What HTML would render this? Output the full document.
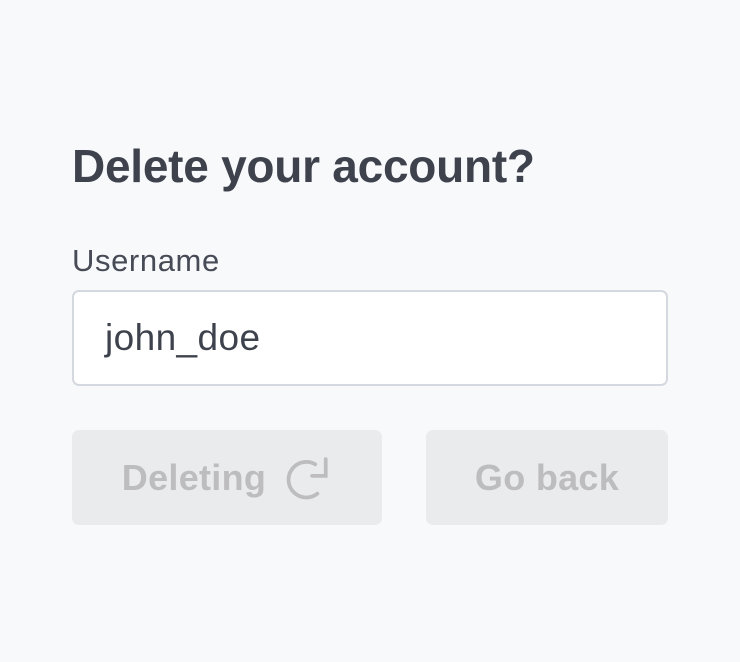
<!DOCTYPE html>
<html><head><style>
body{margin:0;width:740px;height:662px;background:#f8f9fb;font-family:"Liberation Sans",Arial,sans-serif;position:relative;overflow:hidden}
h1{position:absolute;left:72px;top:139px;margin:0;font-size:46px;font-weight:bold;color:#3e424d;letter-spacing:-0.25px}
.lbl{position:absolute;left:72px;top:243px;font-size:31px;color:#474b56;letter-spacing:0.6px}
.inp{position:absolute;left:72px;top:290px;width:592px;height:92px;border:2px solid #d4d8df;border-radius:7px;background:#fff;box-sizing:content-box}
.inp span{position:absolute;left:31px;top:25px;font-size:37px;color:#3e424d;letter-spacing:0.4px}
.btn{position:absolute;top:430px;height:95px;background:#eaebed;border-radius:7px;color:#bdbdbf;font-weight:bold;font-size:36px;display:flex;align-items:center;justify-content:center;letter-spacing:0.3px}
</style></head><body>
<h1>Delete your account?</h1>
<div class="lbl">Username</div>
<div class="inp"><span>john_doe</span></div>
<div class="btn" style="left:72px;width:310px">Deleting<svg style="margin-left:20px;margin-top:2px" width="46" height="46" viewBox="0 0 44 44" fill="none" stroke="#bdbdbf" stroke-width="3.6" stroke-linecap="round"><path d="M28 8 A17 17 0 1 0 30 36"/><path d="M38 3 V19 H25"/></svg></div>
<div class="btn" style="left:426px;width:242px">Go back</div>
</body></html>
